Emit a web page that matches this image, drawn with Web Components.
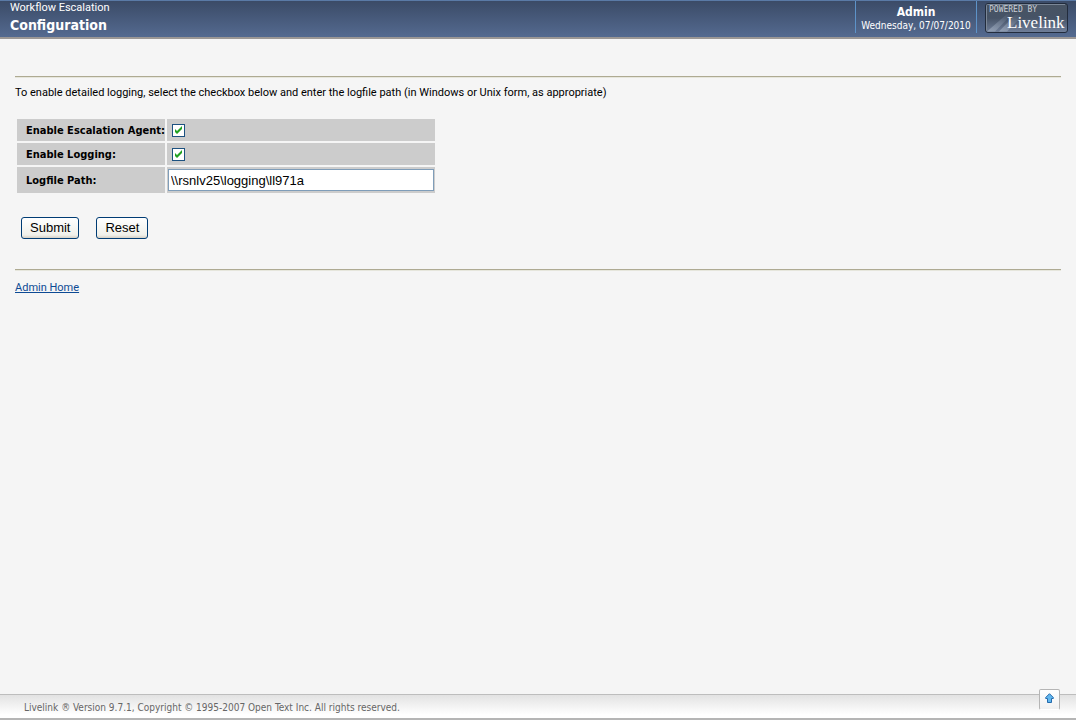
<!DOCTYPE html>
<html lang="en">
<head>
<meta charset="utf-8">
<title>Workflow Escalation Configuration</title>
<style>
html, body { margin: 0; }
body { background: #f5f5f5; color: #000; font: 11px/14px Roboto, "Noto Sans", sans-serif; }
</style>
</head>
<body>
<escalation-page></escalation-page>

<template id="t-page">
<style>
:host { display: flex; flex-direction: column; min-height: 100vh; }
main { flex: 1; padding: 37px 15px 0; }
hr { margin: 0; border: 0; height: 1px; background: #aeaa92; border-bottom: 1px solid #e6e6dc; }
p { margin: 8px 0 17px; }
nav { margin-top: 10px; }
a { color: #0d4a94; }
</style>
<page-header heading="Configuration" user="Admin" date="Wednesday, 07/07/2010">Workflow Escalation</page-header>
<main>
  <hr>
  <p>To enable detailed logging, select the checkbox below and enter the logfile path (in Windows or Unix form, as appropriate)</p>
  <logging-form></logging-form>
  <hr>
  <nav><a href="#home">Admin Home</a></nav>
</main>
<page-footer>Livelink ® Version 9.7.1, Copyright © 1995-2007 Open Text Inc. All rights reserved.</page-footer>
</template>

<template id="t-header">
<style>
:host { display: flex; box-sizing: border-box; height: 39px; color: #fff; border-top: 1px solid #5a7aa6; border-bottom: 2px solid #9b9795;
  background: linear-gradient(#3b4b67, #546a90); }
.title { flex: 1; padding-left: 10px; }
h1 { margin: 1px 0 0; font: bold 14px/18px "DejaVu Sans Condensed", sans-serif; }
.user { box-sizing: border-box; width: 122px; height: 32px; padding-top: 4px; text-align: center; border: solid #5d93c9; border-width: 0 1px; font-family: "DejaVu Sans Condensed", sans-serif; }
.user b { display: block; font-size: 12px; line-height: 14px; }
.user span { font-size: 10px; line-height: 13px; display: block; white-space: nowrap; }
livelink-badge { margin: 2px 8px 0; }
</style>
<div class="title"><div><slot></slot></div><h1></h1></div>
<div class="user"><b></b><span class="date"></span></div>
<livelink-badge></livelink-badge>
</template>

<template id="t-badge">
<style>
:host { display: block; height: 30px; }
svg { display: block; }
</style>
<svg width="83" height="30" viewBox="0 0 83 30" role="img" aria-label="Powered by Livelink">
  <defs>
    <linearGradient id="g" x1="0" y1="0" x2="0" y2="1"><stop offset="0" stop-color="#485463"/><stop offset=".5" stop-color="#465366"/><stop offset="1" stop-color="#71809b"/></linearGradient>
    <linearGradient id="h" x1="0" y1="1" x2="1" y2="0"><stop offset="0" stop-color="#a0adbf" stop-opacity=".75"/><stop offset="1" stop-color="#8d9bb0" stop-opacity="0"/></linearGradient>
  </defs>
  <rect x=".5" y=".5" width="82" height="29" rx="2.500" fill="url(#g)" stroke="#222c3d"/>
  <path d="M1.500 27.500V2.500Q1.500 1.500 2.500 1.500H80" fill="none" stroke="#7b8797"/>
  <path d="M2 28.500L22 11H27L10 28.500Z" fill="url(#h)"/>
  <path d="M14 28.500L30 12H38L22 28.500Z" fill="url(#h)"/>
  <text x="4" y="9" font-family="DejaVu Sans Mono, monospace" font-size="8" fill="#c9ced6">POWERED BY</text>
  <text x="22" y="25" font-family="Liberation Serif, serif" font-size="17" fill="#fff">Livelink</text>
</svg>
</template>

<template id="t-form">
<style>
:host { display: block; }
table { table-layout: fixed; border-collapse: separate; border-spacing: 2px; width: 422px; }
th, td { box-sizing: border-box; background: #ccc; padding: 0; height: 22px; text-align: left; }
th { width: 148px; padding-left: 9px; white-space: nowrap; font-family: "DejaVu Sans Condensed", sans-serif; }
tr:last-child > * { height: 26px; }
label { display: block; padding-top: 2px; }
input[type=checkbox] { appearance: none; box-sizing: border-box; display: block; width: 13px; height: 13px; margin: 0 0 0 5px; border: 1px solid #1c5180; background: #fff; }
input[type=checkbox]:checked { background: #fff url("data:image/svg+xml,%3Csvg xmlns='http://www.w3.org/2000/svg' viewBox='0 0 11 11'%3E%3Cpath d='M2 4v3l2 2 5-5V1L4 6z' fill='%2321a121'/%3E%3C/svg%3E") center / 11px 11px; }
input[type=text] { display: block; box-sizing: border-box; width: 266px; height: 22px; margin: 0 1px; padding: 0 2px; border: 1px solid #7f9db9; background: #fff; color: #000; font: 13px/18px "Liberation Sans", sans-serif; }
.actions { display: flex; gap: 17px; padding: 22px 6px 30px; }
button { box-sizing: border-box; height: 22px; padding: 0 8px; border: 1px solid #003c74; border-radius: 3px; color: #000;
  background: linear-gradient(#fff, #f0f0ea 85%, #d6d0c5); font: 13px/18px "Liberation Sans", sans-serif; }
</style>
<form>
<table>
  <tr><th scope="row"><label for="agent">Enable Escalation Agent:</label></th><td><input type="checkbox" id="agent" checked></td></tr>
  <tr><th scope="row"><label for="logging">Enable Logging:</label></th><td><input type="checkbox" id="logging" checked></td></tr>
  <tr><th scope="row"><label for="path">Logfile Path:</label></th><td><input type="text" id="path" value="\\rsnlv25\logging\ll971a"></td></tr>
</table>
<div class="actions"><button type="submit">Submit</button><button type="reset">Reset</button></div>
</form>
</template>

<template id="t-footer">
<style>
:host { display: flex; box-sizing: border-box; height: 26px; align-items: center; justify-content: space-between; padding: 0 16px 0 24px; border-top: 1px solid #bdbdbd; border-bottom: 2px solid #b5b5b5;
  background: linear-gradient(#e2e2e2, #fff 85%); color: #666; font: 10px/14px "DejaVu Sans Condensed", sans-serif; }
span { padding-top: 2px; }
a { box-sizing: border-box; align-self: flex-start; width: 21px; height: 21px; margin-top: -6px; padding: 3px 5px; border: 1px solid #b5b5b5; border-bottom-color: transparent; border-radius: 2px; background: linear-gradient(#fff, #f1f1f1); }
svg { display: block; }
</style>
<span><slot></slot></span>
<a href="#top" aria-label="Back to top"><svg width="9" height="10" viewBox="0 0 9 10"><path d="M4.500 .7L8.300 4.500V5.500H6.500V9.500H2.500V5.500H.7V4.500Z" fill="#62b7ee" stroke="#256bad"/></svg></a>
</template>

<script>
class TemplateElement extends HTMLElement {
  constructor() {
    super();
    const t = document.getElementById(this.constructor.template);
    this.attachShadow({ mode: "open" }).append(document.importNode(t.content, true));
  }
}
customElements.define("livelink-badge", class extends TemplateElement { static template = "t-badge"; });
customElements.define("page-header", class extends TemplateElement {
  static template = "t-header";
  connectedCallback() {
    const set = (sel, name) => { this.shadowRoot.querySelector(sel).textContent = this.getAttribute(name); };
    set("h1", "heading"); set("b", "user"); set(".date", "date");
  }
});
customElements.define("logging-form", class extends TemplateElement {
  static template = "t-form";
  connectedCallback() { this.shadowRoot.querySelector("form").addEventListener("submit", e => e.preventDefault()); }
});
customElements.define("page-footer", class extends TemplateElement { static template = "t-footer"; });
customElements.define("escalation-page", class extends TemplateElement { static template = "t-page"; });
</script>
</body>
</html>
